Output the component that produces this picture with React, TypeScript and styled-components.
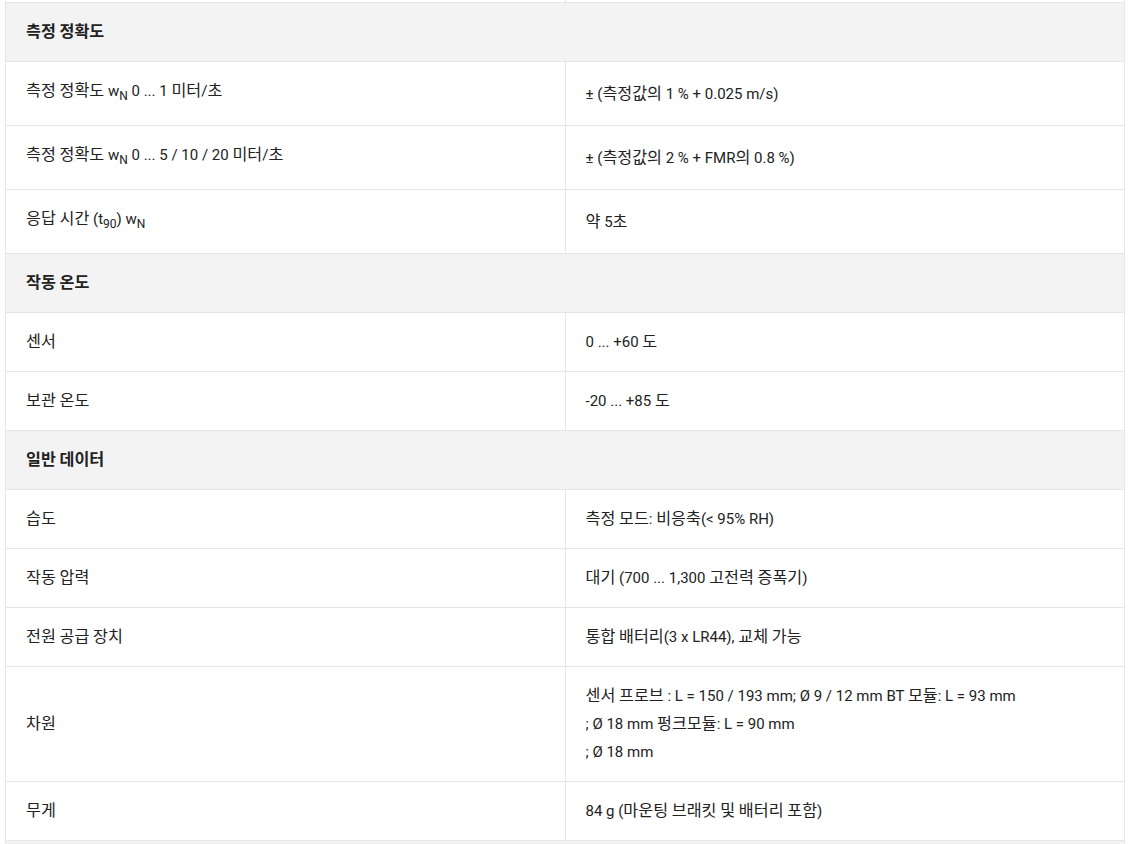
import React from "react";
import styled, { createGlobalStyle } from "styled-components";

const Global = createGlobalStyle`
  html, body { margin: 0; padding: 0; background: #fff; }
  body { font-family: Roboto, "Noto Sans CJK KR", sans-serif; color: #222; }
`;

const Wrap = styled.div`
  padding: 0 4px 0 5px;
`;

const Table = styled.table`
  width: 1120px;
  border-collapse: collapse;
  font-size: 15px;
  line-height: 28px;
`;

const Cell = styled.td`
  border: 1px solid #e6e6e6;
  padding: 15px 20px;
  vertical-align: middle;
  width: 50%;
  color: #222;
`;

const SpacerCell = styled.td`
  border: 1px solid #e6e6e6;
  border-top: none;
  padding: 0;
  height: 2px;
  line-height: 0;
`;

const HeadCell = styled.td`
  border: 1px solid #e6e6e6;
  background: #f3f3f3;
  padding: 15px 20px;
  font-weight: 700;
  color: #222;
`;

const Hangul = styled.span`
  font-family: "Noto Sans CJK KR", sans-serif;
  font-size: 16.2px;
  line-height: 16px;
`;

const Sub = styled.sub`
  font-size: 12px;
`;

// Parse a plain string: "_{x}" -> subscript, "\n" -> line break, Hangul runs -> Hangul span
function rich(text: string): React.ReactNode[] {
  const out: React.ReactNode[] = [];
  let key = 0;
  const lines = text.split("\n");
  lines.forEach((line, li) => {
    if (li > 0) out.push(<br key={key++} />);
    const parts = line.split(/(_\{[^}]*\})/);
    parts.forEach((p) => {
      if (!p) return;
      if (p.startsWith("_{")) {
        out.push(<Sub key={key++}>{p.slice(2, -1)}</Sub>);
        return;
      }
      p.split(/([\uAC00-\uD7A3\u3131-\u318E]+)/).forEach((seg) => {
        if (!seg) return;
        if (/[\uAC00-\uD7A3\u3131-\u318E]/.test(seg)) out.push(<Hangul key={key++}>{seg}</Hangul>);
        else out.push(<React.Fragment key={key++}>{seg}</React.Fragment>);
      });
    });
  });
  return out;
}

type Row = { label: string; value: string };
type Section = { title: string; rows: Row[] };

const sections: Section[] = [
  {
    title: "측정 정확도",
    rows: [
      { label: "측정 정확도 w_{N} 0 ... 1 미터/초", value: "± (측정값의 1 % + 0.025 m/s)" },
      { label: "측정 정확도 w_{N} 0 ... 5 / 10 / 20 미터/초", value: "± (측정값의 2 % + FMR의 0.8 %)" },
      { label: "응답 시간 (t_{90}) w_{N}", value: "약 5초" },
    ],
  },
  {
    title: "작동 온도",
    rows: [
      { label: "센서", value: "0 ... +60 도" },
      { label: "보관 온도", value: "-20 ... +85 도" },
    ],
  },
  {
    title: "일반 데이터",
    rows: [
      { label: "습도", value: "측정 모드: 비응축(< 95% RH)" },
      { label: "작동 압력", value: "대기 (700 ... 1,300 고전력 증폭기)" },
      { label: "전원 공급 장치", value: "통합 배터리(3 x LR44), 교체 가능" },
      {
        label: "차원",
        value:
          "센서 프로브 : L = 150 / 193 mm; Ø 9 / 12 mm BT 모듈: L = 93 mm\n; Ø 18 mm 펑크모듈: L = 90 mm\n; Ø 18 mm",
      },
      { label: "무게", value: "84 g (마운팅 브래킷 및 배터리 포함)" },
    ],
  },
  { title: "", rows: [] },
];

export default function App() {
  return (
    <Wrap>
      <Global />
      <Table>
        <tbody>
          <tr>
            <SpacerCell />
            <SpacerCell />
          </tr>
          {sections.map((s, i) => (
            <React.Fragment key={i}>
              <tr>
                <HeadCell colSpan={2}>{s.title ? rich(s.title) : "\u00a0"}</HeadCell>
              </tr>
              {s.rows.map((r, j) => (
                <tr key={j}>
                  <Cell>{rich(r.label)}</Cell>
                  <Cell>{rich(r.value)}</Cell>
                </tr>
              ))}
            </React.Fragment>
          ))}
        </tbody>
      </Table>
    </Wrap>
  );
}
